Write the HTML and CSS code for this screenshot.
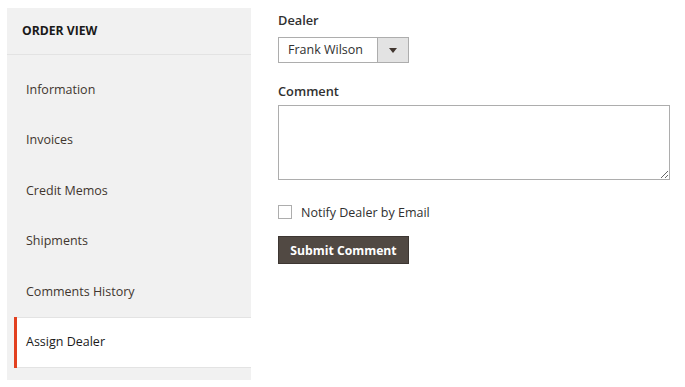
FILE: index.html
```html
<!DOCTYPE html>
<html lang="en">
<head>
    <meta charset="UTF-8">
    <title>Order View - Assign Dealer</title>
    <link rel="stylesheet" href="styles.css">
</head>
<body>
    <div class="page">
        <!-- sidebar -->
        <div class="sidebar">
            <div class="sidebar-title">ORDER VIEW</div>
            <ul class="tabs">
                <li class="tab">Information</li>
                <li class="tab">Invoices</li>
                <li class="tab">Credit Memos</li>
                <li class="tab">Shipments</li>
                <li class="tab">Comments History</li>
                <li class="tab active">Assign Dealer</li>
            </ul>
        </div>

        <!-- form -->
        <div class="content">
            <label class="field-label">Dealer</label>
            <div class="select">
                <span class="select-value">Frank Wilson</span>
                <span class="select-arrow"><span class="triangle"></span></span>
            </div>

            <label class="field-label comment-label">Comment</label>
            <textarea class="comment"></textarea>

            <label class="check-row">
                <input type="checkbox" class="check">
                <span>Notify Dealer by Email</span>
            </label>

            <button class="submit">Submit Comment</button>
        </div>
    </div>
</body>
</html>
```

FILE: styles.css
```css
body {
    margin: 0;
    background: #fff;
    font-family: 'Open Sans', sans-serif;
    color: #303030;
}

.page {
    display: flex;
    align-items: flex-start;
    gap: 27px;
    padding: 8px 7px;
}

/* sidebar */
.sidebar {
    width: 244px;
    flex: none;
    background: #f1f1f1;
    padding-bottom: 12px;
}

.sidebar-title {
    height: 46px;
    line-height: 46px;
    padding-left: 15px;
    font-size: 12.2px;
    font-weight: 700;
    color: #1a1a1a;
    border-bottom: 1px solid #e3e3e3;
}

.tabs {
    list-style: none;
    margin: 0;
    padding: 9.5px 0 0;
}

.tab {
    height: 50.5px;
    line-height: 50.5px;
    margin-left: 7px;
    padding-left: 9px;
    border-left: 3px solid transparent;
    font-size: 12.5px;
    color: #41362f;
}

.tab.active {
    background: #fff;
    border-left-color: #e2401f;
    color: #1a1a1a;
    box-shadow: inset 0 1px 0 #e3e3e3, inset 0 -1px 0 #e3e3e3;
}

/* form */
.content {
    display: flex;
    flex-direction: column;
    align-items: flex-start;
    padding-top: 3px;
}

.field-label {
    font-size: 12.8px;
    font-weight: 600;
    line-height: 18px;
    color: #303030;
}

.select {
    display: flex;
    margin-top: 8px;
    width: 131px;
    height: 26px;
    box-sizing: border-box;
    border: 1px solid #adadad;
    font-size: 12.5px;
}

.select-value {
    flex: 1;
    line-height: 24px;
    padding-left: 9px;
}

.select-arrow {
    width: 30px;
    background: #e3e3e3;
    border-left: 1px solid #adadad;
    display: flex;
    align-items: center;
    justify-content: center;
}

.triangle {
    border: 4px solid transparent;
    border-top: 5px solid #41362f;
    border-bottom: none;
}

.comment-label {
    margin-top: 19px;
}

.comment {
    margin-top: 5px;
    width: 392px;
    height: 75px;
    box-sizing: border-box;
    border: 1px solid #adadad;
    font-family: inherit;
    font-size: 12.5px;
}

.check-row {
    display: flex;
    align-items: center;
    gap: 9px;
    margin-top: 23px;
    height: 18px;
    font-size: 12.5px;
    color: #303030;
}

.check {
    appearance: none;
    margin: 0;
    width: 14px;
    height: 14px;
    border: 1px solid #adadad;
    background: #fff;
}

.submit {
    margin-top: 15px;
    width: 131px;
    height: 28px;
    background: #514943;
    border: 1px solid #3d3632;
    color: #fff;
    font-family: inherit;
    font-size: 12.2px;
    font-weight: 700;
    padding: 0;
}
```
